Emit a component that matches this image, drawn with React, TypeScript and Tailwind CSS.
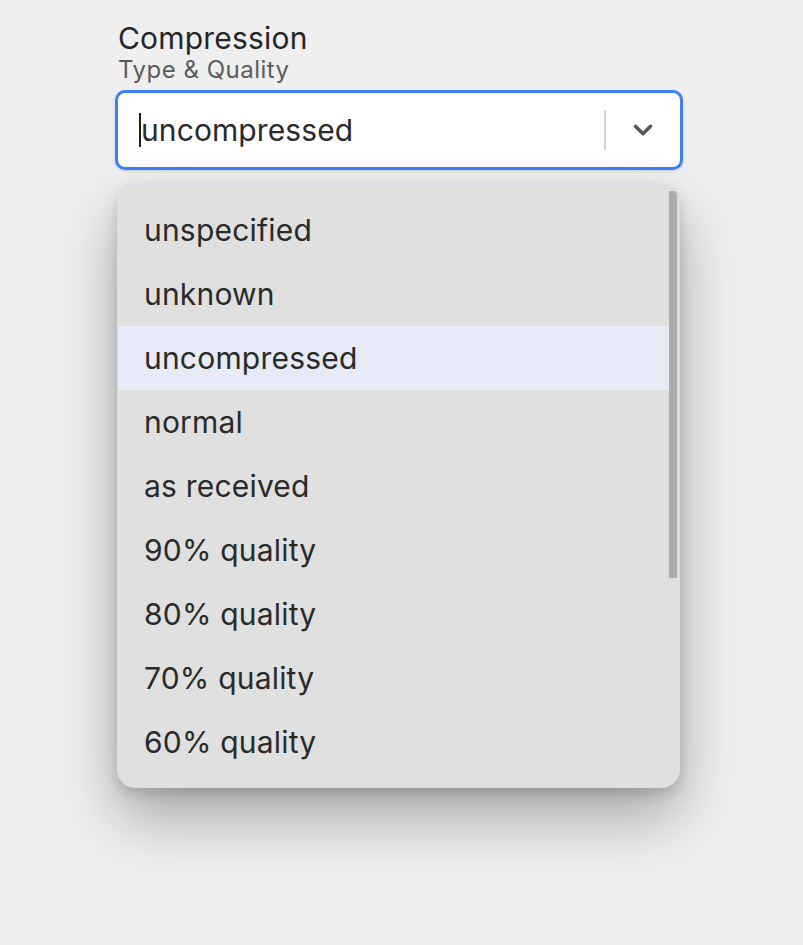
import { ChevronDown } from "lucide-react"

const options = [
  "unspecified",
  "unknown",
  "uncompressed",
  "normal",
  "as received",
  "90% quality",
  "80% quality",
  "70% quality",
  "60% quality",
]

export default function App() {
  const selected = "uncompressed"
  return (
    <div className="min-h-[945px] w-[803px] bg-[#efefef] font-['Inter',sans-serif] text-[#2a2a2a]">
      <div className="ml-[115px] w-[568px] pt-[22px]">
        <div className="pl-[3px]">
          <h2 className="text-[30px] leading-[32px] tracking-[0.2px] text-[#262626]">Compression</h2>
          <p className="text-[24px] leading-[32px] tracking-[0.5px] text-[#5c5c5c]">Type &amp; Quality</p>
        </div>

        <div className="mt-[4px] flex h-[80px] items-center rounded-[10px] border-[3px] border-[#3b82f6] bg-white shadow-[0_1px_3px_rgba(0,0,0,0.15)]">
          <div className="flex flex-1 items-center pl-[21px]">
            <span className="h-[34px] w-[2px] bg-[#1f1f1f]" />
            <span className="text-[30px] leading-[34px] tracking-[0.1px]">{selected}</span>
          </div>
          <span className="h-[40px] w-[2px] bg-[#d2d2d2]" />
          <div className="flex w-[74px] items-center justify-center">
            <ChevronDown className="h-[30px] w-[30px] text-[#555]" strokeWidth={2.75} />
          </div>
        </div>

        <div className="relative ml-[2px] mt-[14px] w-[563px] overflow-hidden rounded-[18px] border border-[#d9dde6] bg-[#e0e0e0] py-[13px] shadow-[0_30px_60px_rgba(0,0,0,0.3),0_6px_14px_rgba(0,0,0,0.14)]">
          {options.map((o) => (
            <div
              key={o}
              className={`flex h-[64px] w-[553px] items-center pl-[26px] text-[30px] tracking-[0.2px] ${
                o === selected ? "bg-[#e6ebf7]" : ""
              }`}
            >
              {o}
            </div>
          ))}
          <div className="absolute right-[2px] top-[6px] h-[387px] w-[8px] bg-[#acacac]" />
        </div>
      </div>
    </div>
  )
}
